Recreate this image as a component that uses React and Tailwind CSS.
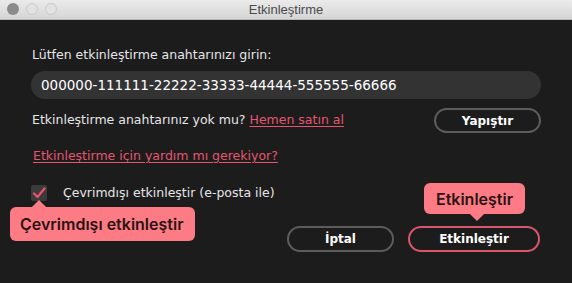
import React from 'react';

const App = () => {
  return (
    <div className="w-[572px] h-[283px] bg-[#1c1c1d] overflow-hidden font-['DejaVu_Sans',sans-serif]">
      {/* Title bar */}
      <div className="relative h-[20px] bg-gradient-to-b from-[#ebebeb] to-[#d5d5d5] border-b border-[#b8b8b8] flex items-center justify-center">
        <div className="absolute left-[7px] top-[3px] flex gap-[7px]">
          <span className="w-[12px] h-[12px] rounded-full bg-[#8b8b8b]" />
          <span className="w-[12px] h-[12px] rounded-full bg-[#e2e2e2] border border-[#c9c9c9]" />
          <span className="w-[12px] h-[12px] rounded-full bg-[#e2e2e2] border border-[#c9c9c9]" />
        </div>
        <span className="text-[13px] text-[#4a4a4a] font-['Liberation_Sans',sans-serif]">Etkinleştirme</span>
      </div>

      <div className="relative px-[31px] pt-[25px] text-[#e6e6e6]">
        <p className="text-[12.5px] pl-[1px] leading-[20px]">Lütfen etkinleştirme anahtarınızı girin:</p>

        <div className="mt-[6px] h-[28px] rounded-full bg-[#333334] flex items-center px-[10px] text-[13.5px] text-white">
          000000-111111-22222-33333-44444-555555-66666
        </div>

        <div className="mt-[9px] flex items-center justify-between">
          <p className="text-[12.5px] pl-[1px]">
            Etkinleştirme anahtarınız yok mu?{' '}
            <span className="text-[#e5566d] underline underline-offset-2">Hemen satın al</span>
          </p>
          <button className="w-[107px] h-[25px] rounded-full border-2 border-[#5c5c5c] text-[12px] font-bold text-white">
            Yapıştır
          </button>
        </div>

        <p className="mt-[14px] pl-[2px] text-[12.5px] text-[#e5566d] underline underline-offset-2">
          Etkinleştirme için yardım mı gerekiyor?
        </p>

        <div className="mt-[18px] flex items-center gap-[16px]">
          <span className="w-[16px] h-[16px] bg-[#3b3b3c] rounded-[2px] flex items-center justify-center">
            <svg width="14" height="14" viewBox="0 0 14 14" fill="none">
              <path d="M2 7.5 L5.5 11 L12.5 2.5" stroke="#f0506a" strokeWidth="2.2" strokeLinecap="round" strokeLinejoin="round" />
            </svg>
          </span>
          <span className="text-[12.5px]">Çevrimdışı etkinleştir (e-posta ile)</span>
        </div>

        <div className="mt-[23px] flex justify-end gap-[14px] pr-[1px]">
          <button className="w-[107px] h-[26px] rounded-full border-2 border-[#5c5c5c] text-[12px] font-bold text-white">
            İptal
          </button>
          <button className="w-[132px] h-[26px] rounded-full border-2 border-[#d9566b] text-[12px] font-bold text-white">
            Etkinleştir
          </button>
        </div>

        {/* Tooltips */}
        <div className="absolute left-[10px] top-[187px] w-[185px] h-[34px] rounded-[6px] bg-[#fd7b85] flex items-center pl-[10px] font-['Inter',sans-serif] font-semibold text-[16px] text-[#2a1414]">
          <span className="absolute -top-[5px] left-[24px] w-[10px] h-[10px] bg-[#fd7b85] rotate-45" />
          <span className="relative">Çevrimdışı etkinleştir</span>
        </div>
        <div className="absolute left-[424px] top-[163px] w-[101px] h-[31px] rounded-[6px] bg-[#fd7b85] flex items-center justify-center font-['Inter',sans-serif] font-semibold text-[16px] text-[#2a1414]">
          <span className="absolute -bottom-[5px] left-[48px] w-[10px] h-[10px] bg-[#fd7b85] rotate-45" />
          <span className="relative">Etkinleştir</span>
        </div>
      </div>
    </div>
  );
};

export default App;
